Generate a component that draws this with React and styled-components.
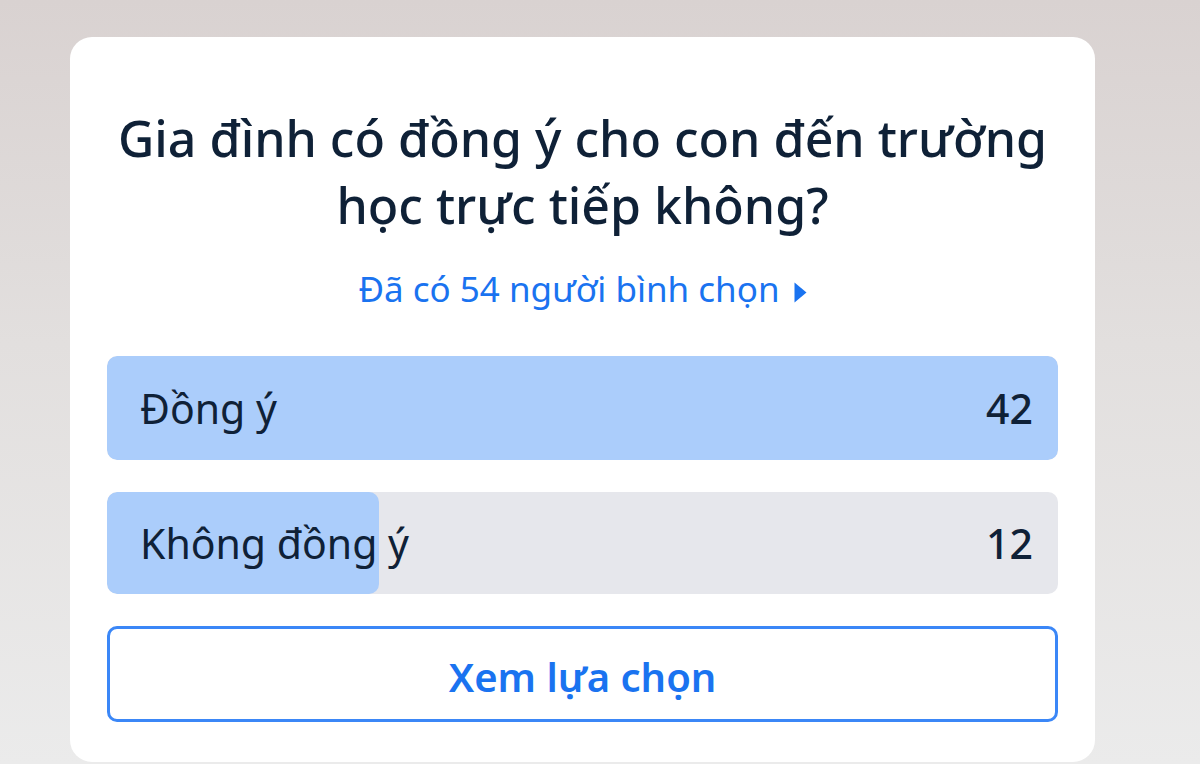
import React from "react";
import styled, { createGlobalStyle } from "styled-components";

const GlobalStyle = createGlobalStyle`
  html, body {
    margin: 0;
    padding: 0;
  }
  body {
    font-family: "Noto Sans", "Open Sans", sans-serif;
    background: linear-gradient(180deg, #d9d2d1 0%, #e2dfde 45%, #ebebeb 100%);
    min-height: 764px;
    overflow: hidden;
  }
`;

const Page = styled.div`
  padding: 37px 105px 0 70px;
`;

const Card = styled.div`
  background: #fff;
  border-radius: 22px;
  width: 1025px;
  height: 725px;
  box-sizing: border-box;
  padding: 68px 37px 0 37px;
  display: flex;
  flex-direction: column;
`;

const Title = styled.h2`
  margin: 0;
  font-size: 50px;
  line-height: 67px;
  font-weight: 500;
  color: #0f2137;
  text-align: center;
  white-space: nowrap;
`;

const Voters = styled.a`
  display: block;
  text-align: center;
  margin: 30px 0 0;
  font-size: 35px;
  line-height: 40px;
  color: #1a73f0;
  text-decoration: none;
  cursor: pointer;

  svg {
    margin-left: 14px;
    vertical-align: -1px;
  }
`;

const Options = styled.div`
  display: flex;
  flex-direction: column;
  gap: 32px;
  margin-top: 47px;
`;

const Bar = styled.div`
  position: relative;
  height: ${(p) => p.$h}px;
  border-radius: 10px;
  background: #e6e7ec;
  overflow: hidden;
  display: flex;
  align-items: center;
  justify-content: space-between;
  padding: 0 25px 0 33px;
  font-size: 41px;
  color: #0f2137;
`;

const Fill = styled.div`
  position: absolute;
  left: 0;
  top: 0;
  bottom: 0;
  background: #abcdfb;
  border-radius: 10px;
`;

const Label = styled.span`
  position: relative;
`;

const Count = styled.span`
  position: relative;
  font-weight: 500;
`;

const Button = styled.button`
  height: 96px;
  border: 3px solid #3b87f7;
  border-radius: 10px;
  background: #fff;
  color: #1a73f0;
  font-family: inherit;
  font-size: 40px;
  font-weight: 600;
  padding-top: 6px;
  cursor: pointer;
`;

const options = [
  { label: "Đồng ý", count: 42, h: 104 },
  { label: "Không đồng ý", count: 12, h: 102 },
];

export default function App() {
  const max = Math.max(...options.map((o) => o.count));
  return (
    <>
      <GlobalStyle />
      <Page>
        <Card>
          <Title>
            Gia đình có đồng ý cho con đến trường
            <br />
            học trực tiếp không?
          </Title>
          <Voters>
            Đã có 54 người bình chọn
            <svg width="13" height="21" viewBox="0 0 13 21">
              <path d="M0.5 0.5 L12.5 10.5 L0.5 20.5 Z" fill="#1a73f0" />
            </svg>
          </Voters>
          <Options>
            {options.map((o) => (
              <Bar key={o.label} $h={o.h}>
                <Fill style={{ width: `${(o.count / max) * 100}%` }} />
                <Label>{o.label}</Label>
                <Count>{o.count}</Count>
              </Bar>
            ))}
            <Button>Xem lựa chọn</Button>
          </Options>
        </Card>
      </Page>
    </>
  );
}
